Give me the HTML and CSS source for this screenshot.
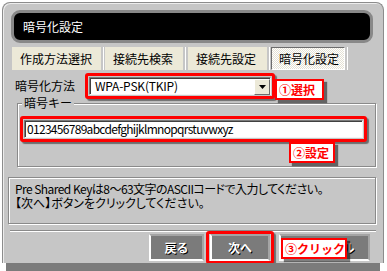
FILE: index.html
```html
<!DOCTYPE html>
<html lang="ja">
<head>
<meta charset="utf-8">
<title>暗号化設定</title>
<link rel="stylesheet" href="styles.css">
</head>
<body>
<div class="window">
  <div class="titlebar"><span class="title-text">暗号化設定</span></div>
  <div class="tabs">
    <div class="tab tab-1">作成方法選択</div>
    <div class="tab tab-2">接続先検索</div>
    <div class="tab tab-3">接続先設定</div>
    <div class="tab tab-4 active">暗号化設定</div>
  </div>
  <div class="method-row">
    <span class="label">暗号化方法</span>
    <div class="hl">
      <div class="select">
        <span class="select-value">WPA-PSK(TKIP)</span>
        <span class="dd"><svg width="7" height="4" viewBox="0 0 7 4"><polygon points="0,0 7,0 3.5,4" fill="#000"/></svg></span>
      </div>
    </div>
  </div>
  <div class="group">
    <span class="legend">暗号キー</span>
    <div class="hl key-hl">
      <div class="input">0123456789abcdefghijklmnopqrstuvwxyz</div>
    </div>
  </div>
  <div class="info">
    <p class="info-1">Pre Shared Keyは8～63文字のASCIIコードで入力してください。</p>
    <p class="info-2">【次へ】ボタンをクリックしてください。</p>
  </div>
  <div class="sep"></div>
  <div class="buttons">
    <button class="btn btn-back">戻る</button>
    <div class="hl btn-hl"><button class="btn btn-next">次へ</button></div>
    <button class="btn btn-cancel">キャンセル</button>
  </div>
  <div class="callout callout-1">①選択</div>
  <div class="callout callout-2">②設定</div>
  <div class="callout callout-3">③クリック</div>
</div>
<div class="band"></div>
</body>
</html>
```
FILE: styles.css
```css
html, body {
  margin: 0;
  padding: 0;
  background: #fff;
}
body {
  width: 387px;
  height: 271px;
  overflow: hidden;
  font-family: "Noto Sans CJK JP", "Liberation Sans", sans-serif;
  font-size: 12px;
  color: #000;
}
.window {
  position: relative;
  box-sizing: border-box;
  margin: 2px 0 0 2px;
  width: 382px;
  height: 261px;
  background: #c6c6c6;
  border: 1px solid #8c8c8c;
  border-bottom: none;
  border-radius: 8px 8px 0 0;
  box-shadow: inset 1px 1px 0 #ececec;
  overflow: hidden;
}
.titlebar {
  box-sizing: border-box;
  margin: 7px 10px 0 8px;
  height: 33px;
  border: 3px solid #888;
  border-radius: 9px;
  background: #000;
  color: #fff;
  padding-left: 9px;
  display: flex;
  align-items: center;
}
.title-text {
  font-size: 12px;
  line-height: 14px;
}
.tabs {
  display: flex;
  margin: 4px 0 0 9px;
  height: 23px;
}
.tab {
  box-sizing: border-box;
  height: 23px;
  background: #ece9d8;
  padding-left: 8px;
  line-height: 23px;
  white-space: nowrap;
  box-shadow: 2px 0 0 #c6c6c6, 3px 0 0 #fff;
}
.tab-1 { width: 89px; }
.tab-2 { width: 78px; margin-left: 4px; }
.tab-3 { width: 79px; margin-left: 5px; }
.tab-4 { width: 74px; margin-left: 4px; }
.tab.active {
  border: 1px solid;
  border-color: #6c6c6c #fff #fff #6c6c6c;
  padding-left: 7px;
  line-height: 21px;
  background: repeating-conic-gradient(#ffffff 0 25%, #e4e1d4 0 50%) 0 0 / 2px 2px;
}
.method-row {
  display: flex;
  align-items: center;
  margin-top: 3px;
  height: 26px;
}
.label {
  margin-left: 12px;
  width: 70px;
  line-height: 14px;
}
.hl {
  border: 3px solid #ff0000;
  border-radius: 3px;
  padding: 1px;
  background: #c6c6c6;
  box-shadow: 2px 2px 1px rgba(0, 0, 0, 0.45);
}
.select {
  box-sizing: border-box;
  width: 182px;
  height: 18px;
  background: #fff;
  border: 1px solid;
  border-color: #7a7a7a #f4f4f4 #f4f4f4 #7a7a7a;
  box-shadow: inset 1px 1px 0 #404040;
  display: flex;
  align-items: center;
  justify-content: space-between;
  padding-left: 5px;
}
.select-value {
  font-size: 12px;
  line-height: 14px;
  letter-spacing: -0.2px;
}
.dd {
  box-sizing: border-box;
  width: 16px;
  height: 16px;
  margin-top: 1px;
  background: #ece9d8;
  border: 1px solid;
  border-color: #fff #6c6c6c #6c6c6c #fff;
  display: flex;
  align-items: center;
  justify-content: center;
}
.group {
  margin: 4px 7px 0 14px;
  border: 1px solid #8a8a8a;
  box-shadow: inset 1px 1px 0 #fff, 1px 1px 0 #fff;
  padding-bottom: 24px;
}
.legend {
  display: block;
  width: max-content;
  margin: -8px 0 0 4px;
  padding: 0 2px;
  background: #c6c6c6;
  line-height: 14px;
}
.key-hl {
  margin: 6px 8px 0 2px;
}
.input {
  box-sizing: border-box;
  height: 18px;
  background: #fff;
  border: 1px solid;
  border-color: #7a7a7a #f4f4f4 #f4f4f4 #7a7a7a;
  box-shadow: inset 1px 1px 0 #404040;
  padding-left: 2px;
  line-height: 16px;
  font-size: 12px;
  letter-spacing: -0.7px;
  white-space: nowrap;
}
.info {
  box-sizing: border-box;
  height: 47px;
  margin: 10px 7px 0 5px;
  border: 1px solid #8a8a8a;
  box-shadow: inset 1px 1px 0 #fff, 1px 1px 0 #fff;
  padding: 4px 6px;
}
.info p {
  margin: 0;
  line-height: 14px;
  font-feature-settings: "palt";
  white-space: nowrap;
}
.info-1 { letter-spacing: -0.55px; }
.sep {
  height: 1px;
  margin: 6px 7px 0 7px;
  background: #8a8a8a;
  box-shadow: 0 1px 0 #fff;
}
.buttons {
  display: flex;
  justify-content: flex-end;
  align-items: flex-start;
  margin: 3px 13px 0 0;
}
.btn {
  box-sizing: border-box;
  height: 27px;
  margin: 0;
  padding: 0;
  border: 2px solid;
  border-color: #a4a4a4 #a4a4a4 #fff #fff;
  background: #7b7b7b;
  color: #fff;
  font-family: "Noto Sans CJK JP", sans-serif;
  font-size: 12px;
  font-weight: bold;
  text-shadow: 1px 1px 0 #000;
  white-space: nowrap;
}
.btn-back { width: 55px; }
.btn-hl {
  margin: -3px -4px 0 2px;
  padding: 0 1px;
}
.btn-next { width: 60px; display: block; }
.btn-cancel {
  width: 91px;
  margin-left: 9px;
}
.callout {
  position: absolute;
  box-sizing: border-box;
  background: #fff;
  border: 2px solid #ff0000;
  color: #ff0000;
  font-weight: bold;
  font-size: 12px;
  line-height: 17px;
  padding-left: 2px;
  white-space: nowrap;
  box-shadow: 3px 3px 1px rgba(0, 0, 0, 0.5);
}
.callout-1 { left: 272px; top: 76px; width: 49px; height: 21px; }
.callout-2 { left: 286px; top: 139px; width: 46px; height: 21px; }
.callout-3 { left: 278px; top: 235px; width: 66px; height: 21px; }
.band {
  margin-left: 6px;
  width: 374px;
  height: 10px;
  background: #7b7b7b;
}
```
